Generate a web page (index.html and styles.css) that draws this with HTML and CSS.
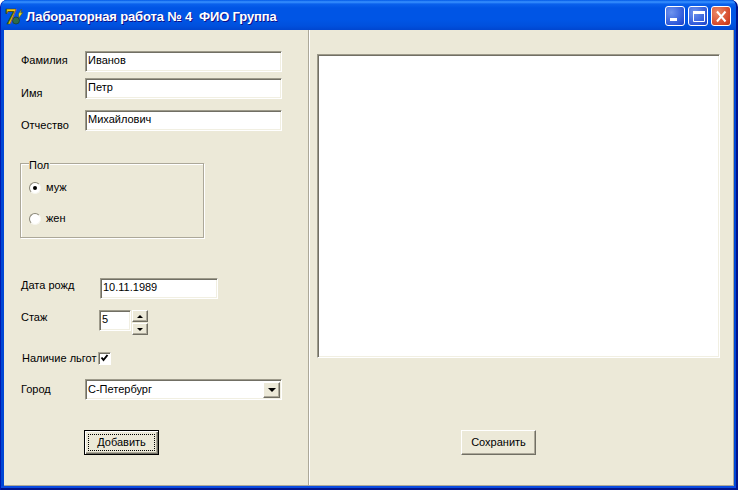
FILE: index.html
```html
<!DOCTYPE html>
<html lang="ru">
<head>
<meta charset="utf-8">
<title>Лабораторная работа № 4 ФИО Группа</title>
<link rel="stylesheet" href="styles.css">
</head>
<body>
<div class="window">
  <header class="titlebar">
    <svg class="app-icon" width="18" height="18" viewBox="0 0 18 18">
      <circle cx="11" cy="12.500" r="3.500" fill="#2f6b4a" stroke="#16331f" stroke-width=".6"/>
      <path d="M13.500 6l3-5-.8 4 2.300-1-4 6z" fill="#e8e020" stroke="#4a4a10" stroke-width=".5"/>
      <text x="0" y="16" class="app-icon-seven">7</text>
    </svg>
    <span class="title-text">Лабораторная работа № 4&nbsp; ФИО Группа</span>
    <div class="caption-buttons">
      <div class="cap-btn"><svg width="18" height="18" viewBox="0 0 18 18"><rect x="4" y="11" width="7" height="3" fill="#fff"/></svg></div>
      <div class="cap-btn"><svg width="18" height="18" viewBox="0 0 18 18"><path d="M4.5 4.5h11v10h-11z" fill="none" stroke="#fff"/><rect x="4" y="4" width="12" height="3" fill="#fff"/></svg></div>
      <div class="cap-btn cap-close"><svg width="18" height="18" viewBox="0 0 18 18"><path d="M5 4.5l8.500 10M13.500 4.500l-8.500 10" stroke="#fff" stroke-width="2" fill="none"/></svg></div>
    </div>
  </header>
  <main class="client">
    <section class="left">
      <div class="row row-name">
        <span class="label label-name pad-3">Фамилия</span>
        <div class="field field-name">Иванов</div>
      </div>
      <div class="row row-first">
        <span class="label label-name pad-9">Имя</span>
        <div class="field field-name">Петр</div>
      </div>
      <div class="row row-middle">
        <span class="label label-name pad-9">Отчество</span>
        <div class="field field-name">Михайлович</div>
      </div>
      <div class="group">
        <span class="legend">Пол</span>
        <div class="radio-row radio-first"><span class="radio radio-on"></span><span>муж</span></div>
        <div class="radio-row radio-second"><span class="radio"></span><span>жен</span></div>
      </div>
      <div class="row row-date">
        <span class="label label-date pad-1">Дата рожд</span>
        <div class="field field-date">10.11.1989</div>
      </div>
      <div class="row row-exp">
        <span class="label label-exp pad-1">Стаж</span>
        <div class="field field-exp">5</div>
        <div class="spin">
          <div class="spin-btn"><span class="arrow-up"></span></div>
          <div class="spin-btn"><span class="arrow-down"></span></div>
        </div>
      </div>
      <div class="row row-check">
        <span class="label label-check">Наличие льгот</span>
        <div class="checkbox"><svg width="9" height="9" viewBox="0 0 9 9"><path d="M1.500 3.500l2 2.500 4-5" fill="none" stroke="#000" stroke-width="2"/></svg></div>
      </div>
      <div class="row row-city">
        <span class="label label-name pad-4">Город</span>
        <div class="field field-name field-combo">
          <span>С-Петербург</span>
          <div class="combo-btn"><span class="arrow-down arrow-big"></span></div>
        </div>
      </div>
      <div class="button button-default"><span class="focus">Добавить</span></div>
    </section>
    <div class="splitter"></div>
    <section class="right">
      <div class="memo"></div>
      <div class="button button-save">Сохранить</div>
    </section>
  </main>
</div>
</body>
</html>
```

FILE: styles.css
```css
* { box-sizing: border-box; }
html, body { margin: 0; padding: 0; background: #fff; }
body { font: 11px/13px "Liberation Sans", Arial, sans-serif; color: #000; }
.window { width: 738px; height: 490px; display: flex; flex-direction: column; overflow: hidden; border-radius: 7px 7px 0 0;
  background: linear-gradient(#0046d5 486px, #0a4be0 486px, #0a4be0 488px, #00138c 488px),
    #0046d5;
  border-left: 1px solid #0019b0; border-right: 2px solid #00138c; }

.titlebar { height: 30px; flex: none; display: flex; align-items: center; padding: 3px 7px 0 5px; margin: 0 -2px 0 -1px;
  background: linear-gradient(#0058e6 0, #3a93ff 2px, #0a61ec 4px, #0055e5 8px, #0055e5 20px, #0050dd 26px, #0046cf 30px); }
.app-icon { flex: none; margin-right: 3px; overflow: visible; }
.app-icon-seven { font: bold 23px "Liberation Serif", serif; fill: #f0c814; stroke: #4a3c00; stroke-width: .7px; }
.title-text { color: #fff; font: bold 13px/16px "Liberation Sans", sans-serif; letter-spacing: -.15px; text-shadow: 1px 1px #0f1089; flex: 1; white-space: pre; margin-top: 1px; }
.caption-buttons { display: flex; gap: 3px; margin-bottom: 1px; }
.cap-btn { width: 20px; height: 20px; border: 1px solid #fff; border-radius: 3px; background: radial-gradient(circle at 30% 30%, #6f94ee, #2a55d8 75%, #1f3fc0); }
.cap-btn svg { display: block; }
.cap-close { background: radial-gradient(circle at 30% 30%, #eb8a68, #d5482a 70%, #b83212); }

.client { flex: none; height: 455px; width: 730px; margin: 0 2px 0 3px; display: flex; background: #ece9d8; box-shadow: 0 1px #aca899; border-right: 1px solid #aca899; }
.left { width: 304px; flex: none; }
.splitter { width: 2px; flex: none; border-left: 1px solid #aca899; background: #fff; }
.right { flex: 1; }

.row { display: flex; margin-left: 17px; }
.label { flex: none; white-space: nowrap; }
.label-name { width: 64px; }
.label-date { width: 79px; }
.label-exp { width: 78px; }
.label-check { width: 77px; padding-left: 1px; align-self: center; }
.pad-1 { padding-top: 1px; }
.pad-3 { padding-top: 3px; }
.pad-4 { padding-top: 4px; }
.pad-9 { padding-top: 9px; }

.row-name { margin-top: 21px; }
.row-first { margin-top: 6px; height: 21px; }
.row-middle { margin-top: 11px; height: 21px; }
.row-date { margin-top: 40px; }
.row-exp { margin-top: 11px; }
.row-check { margin-top: 17px; height: 13px; }
.row-city { margin-top: 14px; }

.field { background: #fff; border: 1px solid; border-color: #9d9a8a #fff #fff #9d9a8a; box-shadow: inset 1px 1px #716f64, inset -1px -1px #f1efe2; padding: 2px 0 0 2px; white-space: nowrap; }
.field-name { width: 197px; height: 21px; }
.field-date { width: 118px; height: 21px; }
.field-exp { width: 32px; height: 21px; }
.field-combo { display: flex; justify-content: space-between; padding: 3px 1px 0 2px; }

.group { position: relative; width: 184px; height: 75px; margin: 32px 0 0 16px; border: 1px solid #aca899; box-shadow: 1px 1px #fff, inset 1px 1px #fff; padding-left: 8px; }
.legend { position: absolute; left: 8px; top: -5px; background: #ece9d8; padding: 0 1px 0 0; }
.radio-row { display: flex; align-items: center; gap: 5px; height: 13px; }
.radio-first { margin-top: 17px; }
.radio-second { margin-top: 18px; }
.radio { width: 12px; height: 12px; border-radius: 50%; background: #fff; border: 1px solid; border-color: #8a8778 #f7f6ef #f7f6ef #8a8778; display: flex; align-items: center; justify-content: center; }
.radio-on::after { content: ""; width: 4px; height: 4px; border-radius: 50%; background: #000; }

.spin { width: 16px; margin-left: 1px; display: flex; flex-direction: column; gap: 1px; height: 25px; }
.spin-btn { height: 12px; display: flex; align-items: center; justify-content: center; background: #ece9d8; border: 1px solid; border-color: #fff #716f64 #716f64 #fff; box-shadow: inset -1px -1px #aca899; }
.arrow-up { width: 0; height: 0; border: 3px solid transparent; border-top: 0; border-bottom-color: #000; }
.arrow-down { width: 0; height: 0; border: 3px solid transparent; border-bottom: 0; border-top-color: #000; }
.arrow-big { border-width: 4px 4px 0; }

.checkbox { width: 13px; height: 13px; background: #fff; border: 1px solid; border-color: #aca899 #fff #fff #aca899; box-shadow: inset 1px 1px #716f64; padding: 1px; display: flex; align-items: center; justify-content: center; }

.combo-btn { width: 17px; height: 16px; margin-top: -1px; display: flex; align-items: center; justify-content: center; background: #ece9d8; border: 1px solid; border-color: #fff #716f64 #716f64 #fff; box-shadow: inset -1px -1px #aca899; }

.button { width: 75px; height: 25px; display: flex; align-items: center; justify-content: center; background: #ece9d8; border: 1px solid; border-color: #fff #716f64 #716f64 #fff; box-shadow: inset -1px -1px #aca899; }
.button-default { margin: 30px 0 0 80px; border: 1px solid #000; box-shadow: inset 1px 1px #fff, inset -1px -1px #716f64, inset -2px -2px #aca899; padding: 3px; }
.focus { flex: 1; align-self: stretch; border: 1px dotted #000; text-align: center; line-height: 15px; }
.memo { width: 403px; height: 304px; margin: 24px 0 0 7px; background: #fff; border: 1px solid; border-color: #9d9a8a #fff #fff #9d9a8a; box-shadow: inset 1px 1px #716f64, inset -1px -1px #f1efe2; }
.button-save { margin: 72px 0 0 151px; }
```
